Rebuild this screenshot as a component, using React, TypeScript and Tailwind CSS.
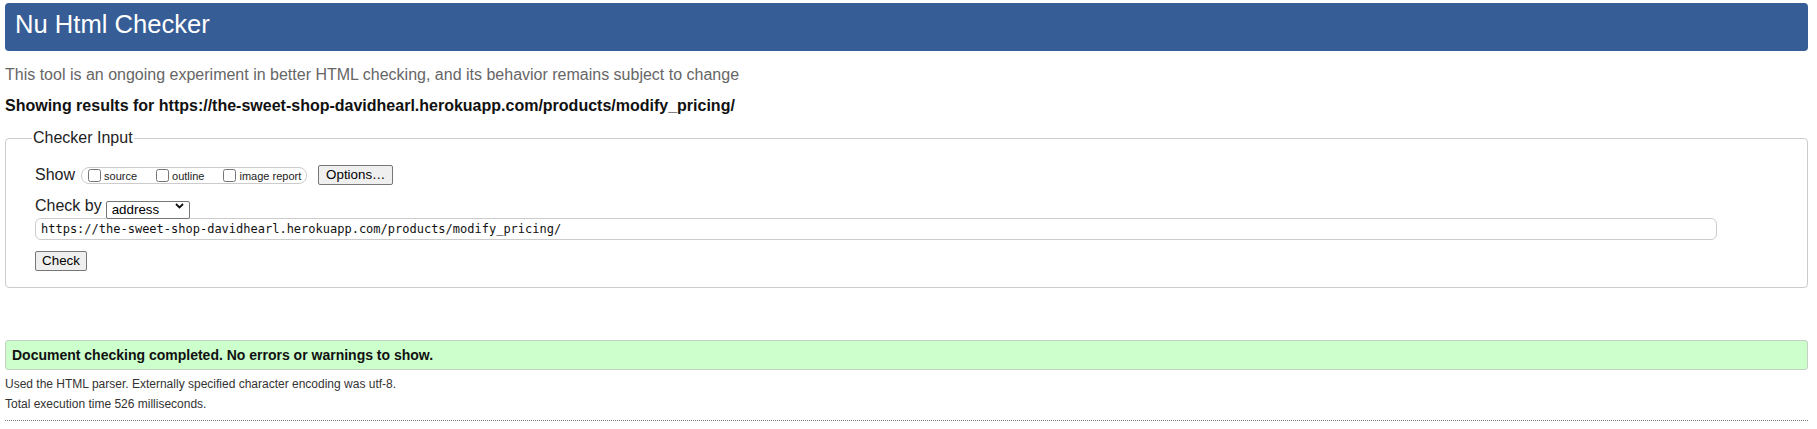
import React from "react";

export default function App() {
  const url = "https://the-sweet-shop-davidhearl.herokuapp.com/products/modify_pricing/";
  return (
    <div className="bg-white w-[1817px] min-h-[429px] pt-[3px] pl-[5px] pr-[9px] font-['Liberation_Sans',Arial,sans-serif] text-black">
      <header className="h-[48px] bg-[#365d95] rounded-[4px] pl-[10px] pt-[7px]">
        <h1 className="text-[25.6px] leading-[29px] text-white font-normal">Nu Html Checker</h1>
      </header>

      <p className="mt-[15px] text-[16px] leading-[18px] text-[#666]">
        This tool is an ongoing experiment in better HTML checking, and its behavior remains subject to change
      </p>
      <p className="mt-[13px] text-[16px] leading-[18px] font-bold text-[#111]">
        Showing results for {url}
      </p>

      <fieldset className="mt-[14px] border border-[#ccc] rounded-[4px] pl-[26px] pb-[15px]">
        <legend className="px-[1px] text-[16px] leading-[18px] text-[#222]">Checker Input</legend>
        <div className="pl-[3px] pt-[18px] flex flex-col">
          <div className="flex items-center h-[20px]">
            <span className="text-[16px] leading-[20px] text-[#222]">Show</span>
            <div className="ml-[6px] h-[17px] border border-[#ccc] rounded-[8px] pl-[6px] pr-[5px] flex items-center text-[11px] text-[#222]">
              <label className="flex items-center mr-[19px]">
                <input type="checkbox" className="w-[13px] h-[13px] m-0 mr-[3px]" />
                <span className="leading-[13px] mt-[3px]">source</span>
              </label>
              <label className="flex items-center mr-[19px]">
                <input type="checkbox" className="w-[13px] h-[13px] m-0 mr-[3px]" />
                <span className="leading-[13px] mt-[3px]">outline</span>
              </label>
              <label className="flex items-center">
                <input type="checkbox" className="w-[13px] h-[13px] m-0 mr-[3px]" />
                <span className="leading-[13px] mt-[3px]">image report</span>
              </label>
            </div>
            <button className="ml-[11px] w-[75px] h-[20px] border border-[#767676] rounded-[2px] bg-[#efefef] text-[13.33px] leading-[16px] text-black">
              Options…
            </button>
          </div>

          <div className="flex items-center h-[18px] mt-[12px]">
            <span className="text-[16px] leading-[20px] text-[#222]">Check by</span>
            <div className="relative ml-[4px] w-[84px] h-[18px]">
              <select
                defaultValue="address"
                className="appearance-none w-[84px] h-[18px] border border-[#767676] rounded-[2px] bg-white pl-[5px] text-[13.33px] leading-[16px] text-black"
              >
                <option value="address">address</option>
                <option value="file">file upload</option>
                <option value="text">text input</option>
              </select>
              <svg className="absolute right-[6px] top-[6px] pointer-events-none" width="9" height="6" viewBox="0 0 9 6">
                <path d="M1 1 L4.5 4.5 L8 1" fill="none" stroke="#111" strokeWidth="1.8" />
              </svg>
            </div>
          </div>

          <input
            readOnly
            value={url}
            className="mt-[3px] w-[1682px] h-[22px] border border-[#ccc] rounded-[6px] pl-[5px] text-[12px] text-[#111] font-['DejaVu_Sans_Mono',monospace]"
          />

          <div className="mt-[8px]">
            <button className="w-[52px] h-[20px] border border-[#767676] rounded-[2px] bg-[#efefef] text-[13.33px] leading-[16px] text-black">
              Check
            </button>
          </div>
        </div>
      </fieldset>

      <div className="mt-[52px] h-[30px] bg-[#ccffcc] border border-[#c4cfc4] rounded-[3px] pl-[6px] flex items-center">
        <p className="text-[14px] font-bold text-[#111]">Document checking completed. No errors or warnings to show.</p>
      </div>

      <p className="mt-[4px] text-[12px] leading-[20px] text-[#333]">
        Used the HTML parser. Externally specified character encoding was utf-8.
      </p>
      <p className="text-[12px] leading-[20px] text-[#333]">Total execution time 526 milliseconds.</p>
      <div className="mt-[6px] border-t border-dotted border-[#777]" />
    </div>
  );
}
